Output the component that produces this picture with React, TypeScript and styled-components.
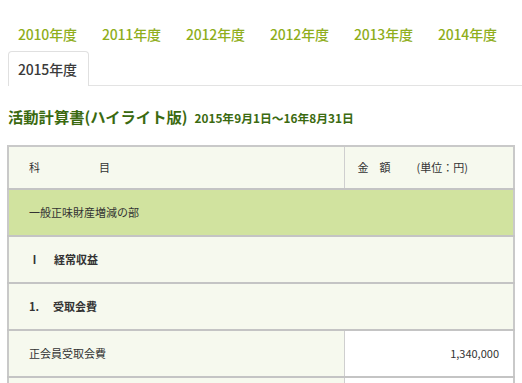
import React from "react";
import styled, { createGlobalStyle } from "styled-components";

const GlobalStyle = createGlobalStyle`
  html, body {
    margin: 0;
    padding: 0;
    background: #ffffff;
    font-family: "Noto Sans CJK JP", "Noto Sans", sans-serif;
    color: #333333;
  }
`;

const Page = styled.div`
  width: 522px;
  height: 383px;
  overflow: hidden;
  padding-top: 16px;
  box-sizing: border-box;
`;

const TabList = styled.ul`
  list-style: none;
  margin: 0 0 0 8px;
  padding: 0;
  display: flex;
  flex-wrap: wrap;
  column-gap: 3px;
  border-bottom: 1px solid #e3e3e3;
`;

const Tab = styled.li<{ $active?: boolean }>`
  width: 81px;
  height: 35px;
  box-sizing: border-box;
  display: flex;
  align-items: center;
  padding-left: 9px;
  font-size: 14px;
  font-weight: 500;
  letter-spacing: -0.2px;
  color: ${(p) => (p.$active ? "#3a3a3a" : "#8fae1b")};
  border: 1px solid ${(p) => (p.$active ? "#e0e0e0" : "transparent")};
  border-bottom: none;
  border-radius: 4px 4px 0 0;
  background: #ffffff;
  margin-bottom: ${(p) => (p.$active ? "-1px" : "0")};
  position: relative;
`;

const Heading = styled.h2`
  margin: 20px 0 0 8px;
  display: flex;
  align-items: baseline;
  gap: 7px;
  color: #3b6a10;
  font-size: 15.3px;
  font-weight: 700;
  line-height: 20px;
`;

const Period = styled.span`
  font-size: 11.8px;
  font-weight: 700;
`;

const Table = styled.table`
  margin: 17px 0 0 7px;
  width: 508px;
  border-collapse: collapse;
  border: 2px solid #c9c9c9;
  font-size: 11px;
`;

const Row = styled.tr<{ $tone?: "head" | "section" | "plain" }>`
  background: ${(p) => (p.$tone === "section" ? "#d1e39f" : "#f6f9ee")};
`;

const Cell = styled.td<{ $bold?: boolean; $amount?: boolean; $white?: boolean }>`
  height: 47px;
  box-sizing: border-box;
  padding: 0 ${(p) => (p.$amount ? "14px" : "16px")} 0 ${(p) => (p.$amount ? "13px" : "20px")};
  border-top: 2px solid #c4c4c4;
  border-left: 1px solid #cfcfcf;
  font-weight: ${(p) => (p.$bold ? 700 : 400)};
  text-align: ${(p) => (p.$amount ? "right" : "left")};
  background: ${(p) => (p.$white ? "#ffffff" : "transparent")};
  color: #333333;
  white-space: pre;
`;

const HeadCell = styled(Cell)`
  height: 42.5px;
  border-top: none;
`;

const Gap = styled.span<{ $w: number }>`
  display: inline-block;
  width: ${(p) => p.$w}px;
`;

const years = ["2010", "2011", "2012", "2012", "2013", "2014", "2015"];

export default function App() {
  return (
    <>
      <GlobalStyle />
      <Page>
        <TabList>
          {years.map((y, i) => (
            <Tab key={i} $active={i === years.length - 1}>
              {y}年度
            </Tab>
          ))}
        </TabList>

        <Heading>
          活動計算書(ハイライト版)
          <Period>2015年9月1日～16年8月31日</Period>
        </Heading>

        <Table>
          <colgroup>
            <col style={{ width: 336 }} />
            <col />
          </colgroup>
          <tbody>
            <Row $tone="head">
              <HeadCell>
                科<Gap $w={59} />目
              </HeadCell>
              <HeadCell $amount style={{ textAlign: "left" }}>
                金<Gap $w={11} />額<Gap $w={26} />(単位：円)
              </HeadCell>
            </Row>
            <Row $tone="section">
              <Cell colSpan={2}>一般正味財産増減の部</Cell>
            </Row>
            <Row>
              <Cell colSpan={2} $bold>
                Ⅰ<Gap $w={14} />経常収益
              </Cell>
            </Row>
            <Row>
              <Cell colSpan={2} $bold>
                1.<Gap $w={14} />受取会費
              </Cell>
            </Row>
            <Row>
              <Cell>正会員受取会費</Cell>
              <Cell $amount $white>
                1,340,000
              </Cell>
            </Row>
            <Row>
              <Cell />
              <Cell $amount $white />
            </Row>
          </tbody>
        </Table>
      </Page>
    </>
  );
}
